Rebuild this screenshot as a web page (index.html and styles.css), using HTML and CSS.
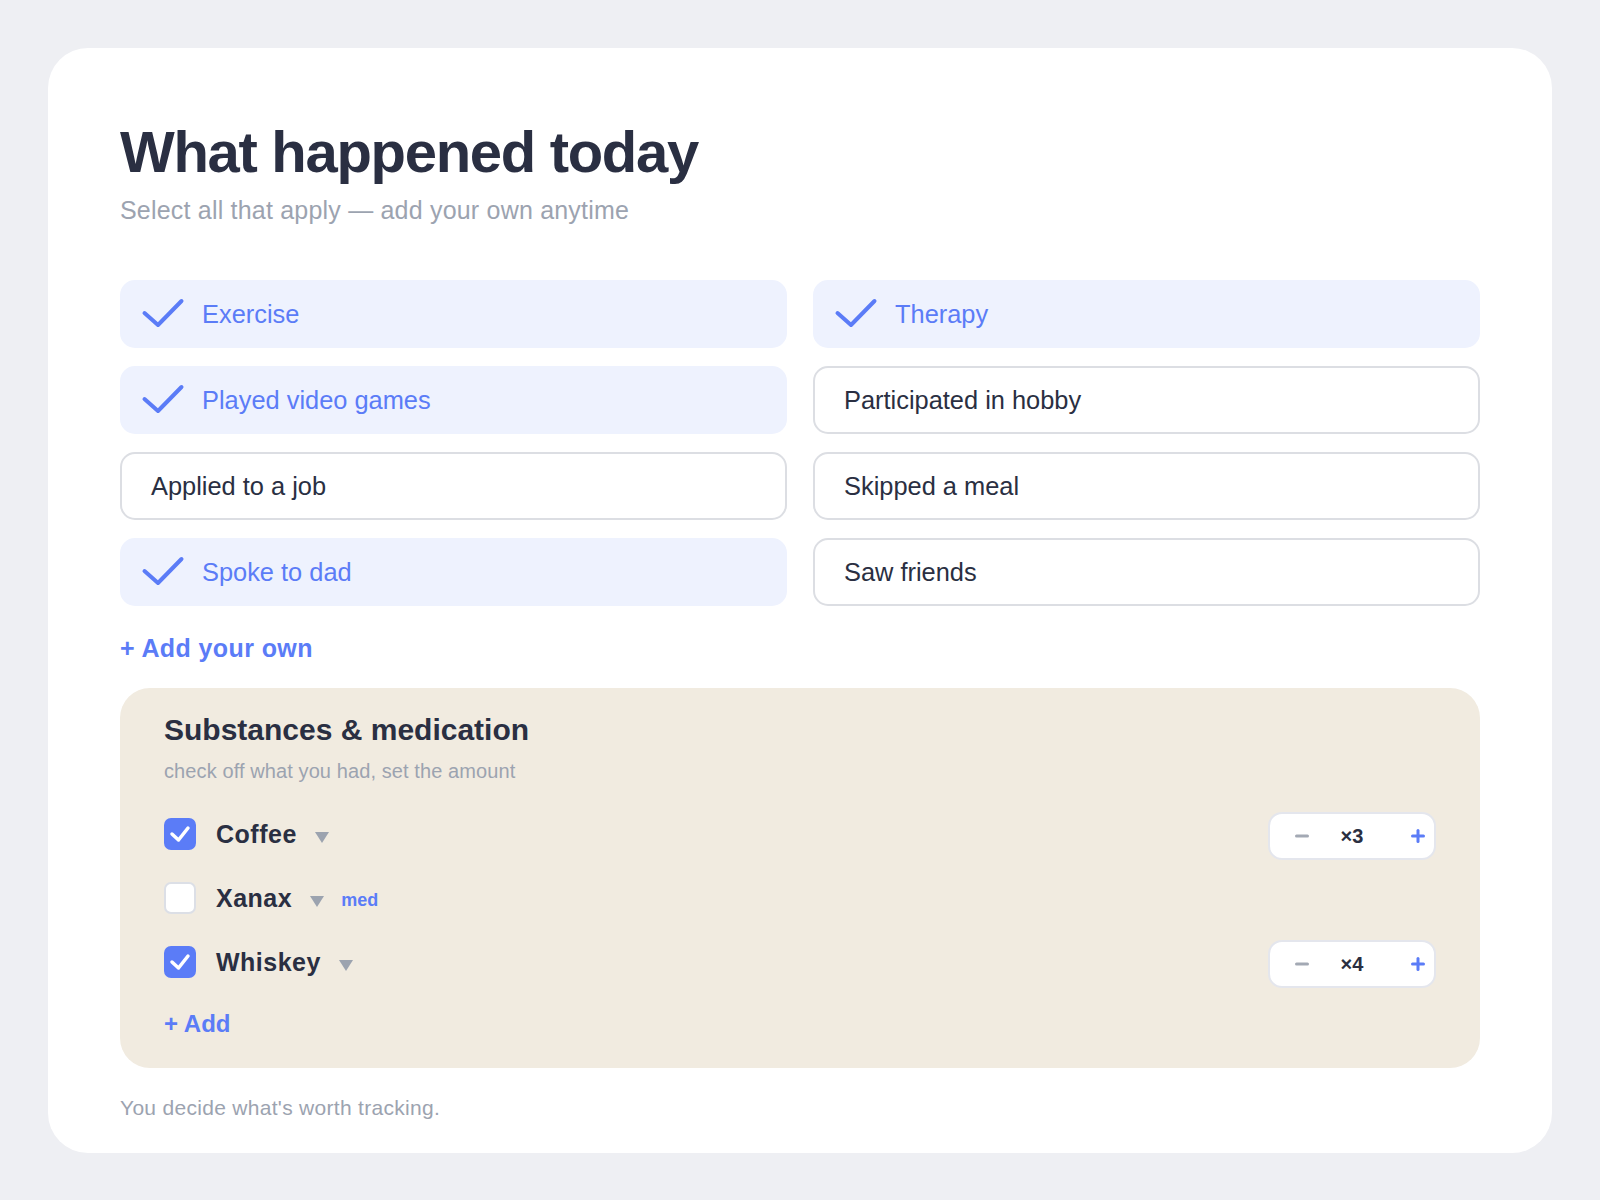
FILE: index.html
```html
<!DOCTYPE html>
<html lang="en">
<head>
    <meta charset="UTF-8">
    <meta name="viewport" content="width=device-width, initial-scale=1.0">
    <title>What happened today</title>
    <link rel="stylesheet" href="styles.css">
</head>
<body>
    <div class="card">
        <h1 class="title">What happened today</h1>
        <p class="subtitle">Select all that apply — add your own anytime</p>

        <div class="options">
            <div class="option selected">
                <svg class="check" viewBox="0 0 44 32"><path d="M3.5 15 L17 27 L40.5 3"/></svg>
                <span>Exercise</span>
            </div>
            <div class="option selected">
                <svg class="check" viewBox="0 0 44 32"><path d="M3.5 15 L17 27 L40.5 3"/></svg>
                <span>Therapy</span>
            </div>
            <div class="option selected">
                <svg class="check" viewBox="0 0 44 32"><path d="M3.5 15 L17 27 L40.5 3"/></svg>
                <span>Played video games</span>
            </div>
            <div class="option">
                <span>Participated in hobby</span>
            </div>
            <div class="option">
                <span>Applied to a job</span>
            </div>
            <div class="option">
                <span>Skipped a meal</span>
            </div>
            <div class="option selected">
                <svg class="check" viewBox="0 0 44 32"><path d="M3.5 15 L17 27 L40.5 3"/></svg>
                <span>Spoke to dad</span>
            </div>
            <div class="option">
                <span>Saw friends</span>
            </div>
        </div>

        <a class="add-own" href="#">+ Add your own</a>

        <section class="substances">
            <h2>Substances &amp; medication</h2>
            <p class="hint">check off what you had, set the amount</p>

            <div class="sub-list">
                <div class="sub-row">
                    <span class="box checked"><svg viewBox="0 0 32 32"><path d="M8 16 L14.5 22 L24 10"/></svg></span>
                    <span class="sub-name">Coffee</span>
                    <svg class="caret" viewBox="0 0 14 11"><polygon points="0,0 14,0 7,11"/></svg>
                    <div class="stepper">
                        <svg class="minus" viewBox="0 0 14 4"><line x1="1.5" y1="2" x2="12.5" y2="2"/></svg>
                        <span class="amount">×3</span>
                        <svg class="plus" viewBox="0 0 14 14"><line x1="7" y1="1.5" x2="7" y2="12.5"/><line x1="1.5" y1="7" x2="12.5" y2="7"/></svg>
                    </div>
                </div>
                <div class="sub-row">
                    <span class="box"></span>
                    <span class="sub-name">Xanax</span>
                    <svg class="caret" viewBox="0 0 14 11"><polygon points="0,0 14,0 7,11"/></svg>
                    <span class="tag">med</span>
                </div>
                <div class="sub-row">
                    <span class="box checked"><svg viewBox="0 0 32 32"><path d="M8 16 L14.5 22 L24 10"/></svg></span>
                    <span class="sub-name">Whiskey</span>
                    <svg class="caret" viewBox="0 0 14 11"><polygon points="0,0 14,0 7,11"/></svg>
                    <div class="stepper">
                        <svg class="minus" viewBox="0 0 14 4"><line x1="1.5" y1="2" x2="12.5" y2="2"/></svg>
                        <span class="amount">×4</span>
                        <svg class="plus" viewBox="0 0 14 14"><line x1="7" y1="1.5" x2="7" y2="12.5"/><line x1="1.5" y1="7" x2="12.5" y2="7"/></svg>
                    </div>
                </div>
            </div>

            <a class="add-sub" href="#">+ Add</a>
        </section>

        <p class="footnote">You decide what's worth tracking.</p>
    </div>
</body>
</html>
```

FILE: styles.css
```css
body {
    font-family: "Liberation Sans", Arial, sans-serif;
    margin: 0;
    background-color: #eeeff3;
    color: #2a2f42;
}

.card {
    margin: 48px 48px 0;
    background-color: #ffffff;
    border-radius: 40px;
    padding: 68px 72px 32px;
}

.title {
    margin: 0;
    font-size: 58px;
    line-height: 72px;
    font-weight: 700;
    letter-spacing: -1.3px;
    color: #2a2f42;
}

.subtitle {
    margin: 7px 0 0;
    font-size: 25px;
    line-height: 30px;
    letter-spacing: 0.2px;
    color: #9ca3b0;
}

.options {
    margin-top: 55px;
    display: grid;
    grid-template-columns: 1fr 1fr;
    gap: 18px 26px;
}

.option {
    height: 68px;
    box-sizing: border-box;
    border: 2px solid #dcdee3;
    border-radius: 15px;
    padding-left: 29px;
    display: flex;
    align-items: center;
    font-size: 25.4px;
    color: #2a2f42;
}

.option.selected {
    background-color: #eef2fe;
    border-color: #eef2fe;
    color: #5b7cf7;
    padding-left: 19px;
}

.check {
    width: 44px;
    height: 32px;
    margin-right: 17px;
    fill: none;
    stroke: #5b7cf7;
    stroke-width: 4;
    stroke-linecap: round;
    stroke-linejoin: round;
}

.add-own {
    display: block;
    margin-top: 27px;
    font-size: 25px;
    line-height: 30px;
    font-weight: 700;
    letter-spacing: 0.4px;
    color: #5b7cf7;
    text-decoration: none;
}

.substances {
    margin-top: 25px;
    background-color: #f1ebe0;
    border-radius: 30px;
    padding: 24px 44px 29px;
}

.substances h2 {
    margin: 0;
    font-size: 30px;
    line-height: 36px;
    font-weight: 700;
    color: #2a2f42;
}

.hint {
    margin: 11px 0 0;
    font-size: 20px;
    line-height: 24px;
    color: #9ca3b0;
    letter-spacing: 0.1px;
}

.sub-list {
    margin-top: 27px;
    display: flex;
    flex-direction: column;
    gap: 16px;
}

.sub-row {
    height: 48px;
    display: flex;
    align-items: center;
}

.box {
    width: 32px;
    height: 32px;
    box-sizing: border-box;
    border-radius: 7px;
    border: 2px solid #dcdfe6;
    background-color: #ffffff;
    margin-right: 20px;
}

.box.checked {
    background-color: #5b7cf7;
    border-color: #5b7cf7;
}

.box svg {
    display: block;
    width: 32px;
    height: 32px;
    margin: -2px;
    fill: none;
    stroke: #ffffff;
    stroke-width: 3.5;
    stroke-linecap: round;
    stroke-linejoin: round;
}

.sub-name {
    font-size: 25px;
    font-weight: 700;
    letter-spacing: 0.5px;
    color: #2a2f42;
}

.caret {
    width: 14px;
    height: 11px;
    margin: 7px 0 0 18px;
    fill: #9ca3af;
}

.tag {
    margin: 4px 0 0 17px;
    font-size: 18px;
    font-weight: 700;
    color: #5b7cf7;
}

.stepper {
    margin: 4px 0 0 auto;
    width: 168px;
    height: 48px;
    box-sizing: border-box;
    border: 2px solid #e4e6ed;
    border-radius: 14px;
    background-color: #ffffff;
    display: flex;
    align-items: center;
    padding-left: 25px;
}

.minus {
    width: 14px;
    height: 4px;
    stroke: #a3a9b4;
    stroke-width: 3;
    stroke-linecap: round;
}

.amount {
    width: 48px;
    margin-left: 19px;
    text-align: center;
    font-size: 20px;
    font-weight: 700;
    color: #2a2f42;
}

.plus {
    width: 14px;
    height: 14px;
    margin-left: 35px;
    stroke: #5b7cf7;
    stroke-width: 3;
    stroke-linecap: round;
}

.add-sub {
    display: block;
    margin-top: 23px;
    font-size: 24px;
    line-height: 30px;
    font-weight: 700;
    color: #5b7cf7;
    text-decoration: none;
}

.footnote {
    margin: 27px 0 0;
    font-size: 21px;
    line-height: 26px;
    letter-spacing: 0.3px;
    color: #9ca3b0;
}
```
